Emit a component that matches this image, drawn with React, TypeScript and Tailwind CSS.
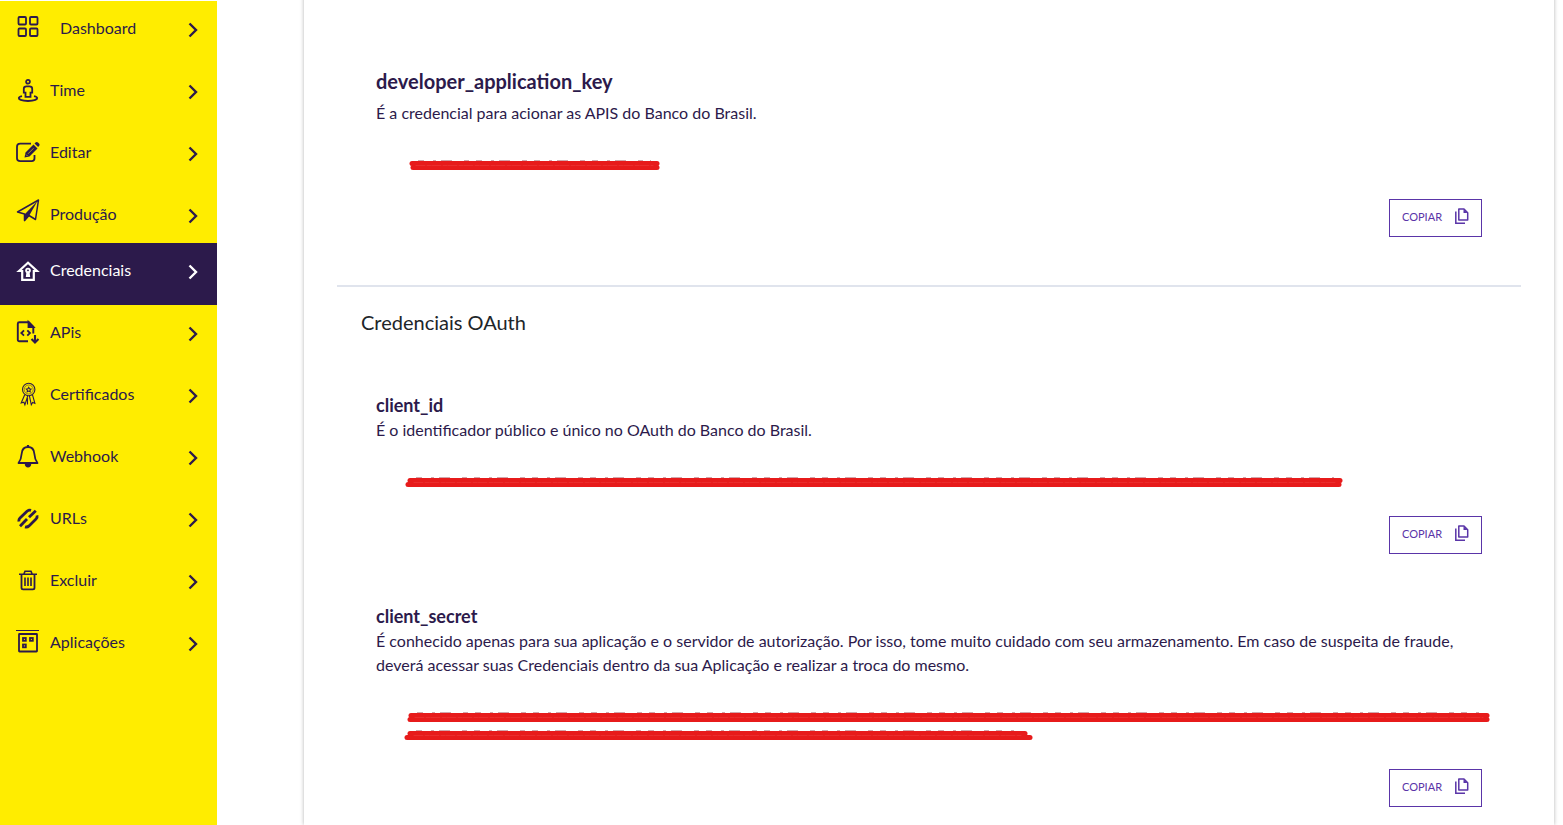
import type { ReactNode } from "react";

const Icon = ({ children }: { children: ReactNode }) => (
  <svg
    viewBox="0 0 24 24"
    className="size-6 shrink-0 overflow-visible"
    fill="none"
    stroke="currentColor"
    strokeWidth="1.8"
    aria-hidden="true"
  >
    {children}
  </svg>
);

const DashboardIcon = () => (
  <Icon>
    <rect x="2.5" y="1" width="7.5" height="7.5" rx="1" />
    <rect x="14" y="1" width="7.5" height="7.5" rx="1" />
    <rect x="2.5" y="12.5" width="7.5" height="7.5" rx="1" />
    <rect x="14" y="12.5" width="7.5" height="7.5" rx="1" />
  </Icon>
);

const TeamIcon = () => (
  <Icon>
    <circle cx="12" cy="3.8" r="1.9" />
    <path d="M10.5 8.3h3c1.600 0 2.700 1 2.700 2.400v4h-1.700v4.100h-5v-4.100H7.800v-4c0-1.400 1.100-2.400 2.700-2.400z" />
    <path d="M6 18.100c-1.900.5-3.200 1.200-3.200 2 0 1.700 4 2.900 9.200 2.900s9.200-1.200 9.200-2.900c0-.8-1.300-1.500-3.200-2" />
  </Icon>
);

const EditIcon = () => (
  <Icon>
    <path d="M15 3.7H4.200C2.300 3.700 1 5 1 6.700v11.600c0 1.700 1.300 2.900 3.200 2.900h11.400c1.700 0 2.900-1.200 2.900-2.900V15" />
    <path
      d="M8.500 17.500l1-5 8-8 4 4-8 8zM18.500 3.500l1-1c.8-.7 1.700-.7 2.500 0l1 1c.8.8.8 1.700 0 2.500l-.9 1z"
      fill="currentColor"
      stroke="none"
    />
    <path d="M12 13.800l5.500-5.500M10 14.500l1.500 1.500" stroke="#ffed00" strokeWidth="0.6" />
  </Icon>
);

const PlaneIcon = () => (
  <Icon>
    <path d="M1.500 10L22.500-2l-3 19.500-6.500-4-4.500 5V12z" strokeWidth="1.5" strokeLinejoin="round" />
    <path d="M21.500-1L8.500 12.500v7L13 14z" fill="currentColor" stroke="none" />
  </Icon>
);

const HouseIcon = () => (
  <Icon>
    <path d="M3 13l9-8.300 9 8.300h-3.200v8.800H6.200V13z" strokeWidth="2.2" />
    <circle cx="12" cy="12.5" r="2.8" fill="currentColor" stroke="none" />
    <path d="M10.600 13h2.800l.8 6H9.800z" fill="currentColor" stroke="none" />
    <circle cx="12" cy="12.3" r="0.9" fill="#2c1a4b" stroke="none" />
  </Icon>
);

const ApiIcon = () => (
  <Icon>
    <path d="M12 21.200H3.300c-.9 0-1.500-.6-1.500-1.500V3.800c0-.9.6-1.500 1.500-1.500h9.500l4.500 4.500v6.700" strokeWidth="1.9" />
    <path d="M12.500 2v5h5z" fill="currentColor" />
    <path d="M8 10.300L5.300 13 8 15.700M11.300 10.300L14 13l-2.700 2.700" />
    <path d="M19 15v7.500M15.500 19l3.500 3.500 3.500-3.500" strokeWidth="2.1" />
  </Icon>
);

const RibbonIcon = () => (
  <Icon>
    <g strokeWidth="1.1">
      <circle cx="12.7" cy="7.5" r="6.2" />
      <circle cx="12.7" cy="7.5" r="4.5" strokeWidth="0.5" />
      <path d="M12.700 5.300l.8 1.400 1.600.3-1.100 1.200.2 1.600-1.500-.7-1.500.7.2-1.600-1.100-1.200 1.600-.3z" />
      <path d="M8.700 12.800l-3.500 8.200 2.700-.8 1 2.600 2.800-8.800M16.500 12.800l2.400 8.500-2.300-.8-1.300 2.300-1.900-9M11.500 16v6.500" />
    </g>
  </Icon>
);

const BellIcon = () => (
  <Icon>
    <path d="M12 3c3.900 0 6 2.700 6.300 6.500.3 4 .7 6.300 3.200 9.500h-19C5 15.800 5.400 13.500 5.700 9.500 6 5.700 8.100 3 12 3z" strokeLinejoin="round" />
    <path d="M12 1v2" strokeWidth="2.2" />
    <path d="M8.800 20h6.400c0 2.200-1.300 3.500-3.200 3.500S8.800 22.200 8.800 20z" fill="currentColor" stroke="none" />
  </Icon>
);

const LinkIcon = () => (
  <Icon>
    <g strokeWidth="2.8">
      <path d="M3 15.500c-.4-1.500 0-2.500 1-3.500l7-6.800c1.200-1.200 2.500-1.400 4-.9" />
      <path d="M4 20.300l7-7.300" />
      <path d="M13 11.300l6.800-6.600" />
      <path d="M9 20.800c1.500.5 2.800.2 4-.9l7-6.900c1-1 1.400-2.200 1-3.700" />
    </g>
  </Icon>
);

const TrashIcon = () => (
  <Icon>
    <path d="M3 6.300h18M8 5.800l1-2.500h6l1 2.500" strokeWidth="1.6" />
    <path d="M5.500 6.300v13.500c0 1 .6 1.600 1.600 1.600h9.800c1 0 1.600-.6 1.600-1.600V6.300" />
    <path d="M9 9.500V18M12 9.500V18M15 9.500V18" strokeWidth="1.6" />
  </Icon>
);

const AppsIcon = () => (
  <Icon>
    <path d="M0 .5h23" strokeWidth="1" />
    <rect x="3" y="4" width="18" height="17.5" rx="0.5" />
    <rect x="7" y="8" width="2.8" height="2.8" />
    <rect x="14" y="8" width="2.8" height="2.8" />
    <rect x="7" y="14.5" width="2.8" height="2.8" />
  </Icon>
);

const items = [
  { label: "Dashboard", icon: DashboardIcon },
  { label: "Time", icon: TeamIcon },
  { label: "Editar", icon: EditIcon },
  { label: "Produção", icon: PlaneIcon },
  { label: "Credenciais", icon: HouseIcon },
  { label: "APis", icon: ApiIcon },
  { label: "Certificados", icon: RibbonIcon },
  { label: "Webhook", icon: BellIcon },
  { label: "URLs", icon: LinkIcon },
  { label: "Excluir", icon: TrashIcon },
  { label: "Aplicações", icon: AppsIcon },
];

const Sidebar = () => (
  <nav className="w-[217px] shrink-0 bg-[#ffed00]">
    <ul className="flex flex-col gap-1.5">
      {items.map(({ label, icon: ItemIcon }) => {
        const active = label === "Credenciais";
        return (
          <li key={label} className={active ? "-my-1.5" : ""}>
            <a
              href="#"
              className={
                active
                  ? "flex h-[62px] items-start bg-[#2c1a4b] pt-[15px] pr-[17px] pl-4 text-white"
                  : "flex h-14 items-start pt-[15px] pr-[17px] pl-4 text-[#2c1a4b]"
              }
            >
              <ItemIcon />
              <span className={label === "Dashboard" ? "ml-5 leading-6" : "ml-2.5 leading-6"}>{label}</span>
              <svg viewBox="0 0 10 16" className="mt-1.5 mr-0.5 ml-auto h-4 w-2.5" fill="none" stroke="currentColor" strokeWidth="2.4" aria-hidden="true">
                <path d="M1.500 1.500L8 8l-6.500 6.500" />
              </svg>
            </a>
          </li>
        );
      })}
    </ul>
  </nav>
);

const CopyButton = () => (
  <button
    type="button"
    className="ml-auto flex h-[38px] w-[93px] items-start justify-between border border-[#5a35a8] px-3 pt-2 text-[11px] text-[#5a35a8]"
  >
    <span className="leading-[18px]">COPIAR</span>
    <svg viewBox="0 0 14 16" className="h-4 w-3.5" fill="none" stroke="currentColor" strokeWidth="1.5" aria-hidden="true">
      <path d="M3.800 1h5.200l3.700 3.700V12H3.800z" strokeLinejoin="round" />
      <path d="M8.500 1v4h4z" fill="currentColor" stroke="none" />
      <path d="M.8 3.500v11.700H10" />
    </svg>
  </button>
);

// Each line is one struck-out row: start and end of the upper and the lower stroke
const Redacted = ({ lines }: { lines: number[][] }) => (
  <div className="mt-8 mb-6">
    {lines.map(([x1, x2, x3, x4], i) => (
      <svg key={i} className="block h-[18px] w-full overflow-visible" fill="none" strokeLinecap="round" aria-hidden="true">
        <path d={`M${x1 + 6} 4H${x2 - 6}`} stroke="#a0505a" strokeWidth="1" strokeDasharray="6 9 3 5 11 12 5 7" strokeLinecap="butt" />
        <path d={`M${x1} 6.500H${x2}`} stroke="#e71b1b" strokeWidth="5" />
        <path d={`M${x3} 10.500H${x4}`} stroke="#e71b1b" strokeWidth="5" />
        <path d={`M${x1 + 4} 8.500H${x2 - 4}`} stroke="#ec3a3a" strokeWidth="0.6" strokeDasharray="9 2 4 1" />
      </svg>
    ))}
  </div>
);

type CredentialProps = {
  name: string;
  text: string;
  lines: number[][];
  large?: boolean;
};

const Credential = ({ name, text, lines, large }: CredentialProps) => (
  <section className="px-[39px]">
    <h3 className={large ? "mb-2 text-xl leading-6 font-bold" : "mb-px text-lg leading-6 font-bold"}>{name}</h3>
    <p className="leading-6">{text}</p>
    <Redacted lines={lines} />
    <CopyButton />
  </section>
);

const App = () => {
  return (
    <div className="flex min-h-screen overflow-hidden bg-white pt-px font-['Lato',sans-serif] text-base font-normal text-[#2c1a4b]">
      <Sidebar />
      <main className="-mt-2 mr-[9px] ml-[87px] flex-1 px-[33px] pt-[76px] pb-4 shadow-[0_0_4px_rgba(0,0,0,0.3)]">
        <Credential
          name="developer_application_key"
          text="É a credencial para acionar as APIS do Banco do Brasil."
          lines={[[36, 281, 37, 281]]}
          large
        />
        <hr className="mt-12 border-t-2 border-[#e0e4ed]" />
        <h2 className="mt-[23px] pl-6 text-xl leading-6 text-[#212529]">Credenciais OAuth</h2>
        <div className="mt-[59px] flex flex-col gap-[50px]">
          <Credential
            name="client_id"
            text="É o identificador público e único no OAuth do Banco do Brasil."
            lines={[[34, 964, 32, 963]]}
          />
          <Credential
            name="client_secret"
            text="É conhecido apenas para sua aplicação e o servidor de autorização. Por isso, tome muito cuidado com seu armazenamento. Em caso de suspeita de fraude, deverá acessar suas Credenciais dentro da sua Aplicação e realizar a troca do mesmo."
            lines={[
              [35, 1111, 34, 1111],
              [34, 649, 31, 654],
            ]}
          />
        </div>
      </main>
    </div>
  );
};

export default App;
